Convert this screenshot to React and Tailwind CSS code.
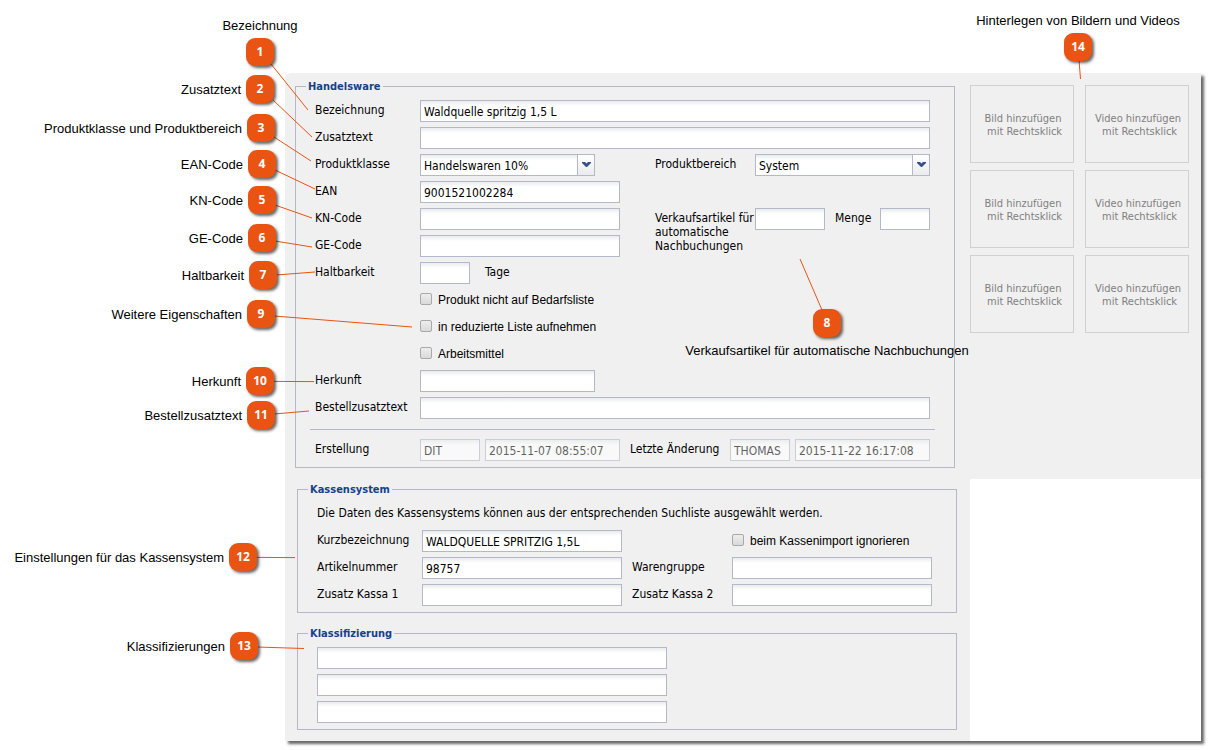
import React, { useState } from 'react';
import clsx from 'clsx';

const CALLOUTS = [
  { n: 1,  x: 246,  y: 38,  side: 'top',    text: 'Bezeichnung', line: [271, 64, 308, 110] },
  { n: 2,  x: 246,  y: 75,  side: 'left',   text: 'Zusatztext', line: [273, 100, 312, 137] },
  { n: 3,  x: 247,  y: 114, side: 'left',   text: 'Produktklasse und Produktbereich', line: [274, 137, 311, 161] },
  { n: 4,  x: 248,  y: 150, side: 'left',   text: 'EAN-Code', line: [275, 170, 315, 189] },
  { n: 5,  x: 248,  y: 186, side: 'left',   text: 'KN-Code', line: [275, 205, 312, 218] },
  { n: 6,  x: 248,  y: 224, side: 'left',   text: 'GE-Code', line: [275, 241, 312, 247] },
  { n: 7,  x: 249,  y: 261, side: 'left',   text: 'Haltbarkeit', line: [276, 275, 315, 272] },
  { n: 8,  x: 813,  y: 309, side: 'bottom', text: 'Verkaufsartikel für automatische Nachbuchungen', line: [822, 310, 800, 259] },
  { n: 9,  x: 247,  y: 300, side: 'left',   text: 'Weitere Eigenschaften', line: [274, 316, 412, 327] },
  { n: 10, x: 246,  y: 367, side: 'left',   text: 'Herkunft', line: [273, 381.4, 314, 381.6] },
  { n: 11, x: 247,  y: 401, side: 'left',   text: 'Bestellzusatztext', line: [274, 414, 309, 411] },
  { n: 12, x: 229,  y: 543, side: 'left',   text: 'Einstellungen für das Kassensystem', line: [256, 557.4, 295, 557.6] },
  { n: 13, x: 230,  y: 632, side: 'left',   text: 'Klassifizierungen', line: [257, 647, 304, 648.5] },
  { n: 14, x: 1064, y: 33,  side: 'top',    text: 'Hinterlegen von Bildern und Videos', line: [1079, 60, 1080.5, 79] },
];

const LABEL_SIDE = {
  left: 'right-full top-px mr-[5px] leading-7',
  top: 'bottom-full left-1/2 mb-0.5 -translate-x-1/2 leading-5',
  bottom: 'top-full left-1/2 mt-1 -translate-x-1/2 leading-5',
};

const Callout = ({ n, x, y, side, text }) => (
  <div className="absolute size-7" style={{ left: x, top: y }}>
    <span className="flex size-7 items-center justify-center rounded-[9px] bg-[#e95412] font-['Open_Sans',sans-serif] text-xs font-bold text-white shadow-[2px_2px_3px_rgba(0,0,0,0.6)]">
      {n}
    </span>
    <span className={clsx("absolute whitespace-nowrap font-['Liberation_Sans',sans-serif] text-[13px] text-black", LABEL_SIDE[side])}>
      {text}
    </span>
  </div>
);

const Callouts = () => (
  <div className="pointer-events-none absolute inset-0">
    <svg className="absolute inset-0 size-full" stroke="#e95412" strokeWidth="1" aria-hidden="true">
      {CALLOUTS.map(({ n, line: [x1, y1, x2, y2] }) => (
        <line key={n} x1={x1} y1={y1} x2={x2} y2={y2} />
      ))}
    </svg>
    {CALLOUTS.map(c => <Callout key={c.n} {...c} />)}
  </div>
);

const Group = ({ title, className, children }) => (
  <fieldset className={clsx('min-w-0 border border-[#b5b8c8] px-2.5 pb-1.5', className)}>
    <legend className="px-0.5 pt-px text-[11px] font-bold leading-3 text-[#15428b]">{title}</legend>
    <div className="flex flex-col gap-[5px] pl-[9px] pr-3.5 pt-[7px]">{children}</div>
  </fieldset>
);

const Row = ({ children }) => <div className="flex h-[22px] items-start">{children}</div>;

const Label = ({ className = 'w-[105px]', ...rest }) => (
  <label className={clsx('shrink-0 whitespace-nowrap pt-[3px] leading-[14px]', className)} {...rest} />
);

const FIELD = 'h-[22px] border border-[#b5b8c8] bg-white bg-linear-to-b from-[#e9eced] to-white to-[5px] px-[3px] pt-0.5 text-black outline-none';

const Field = ({ className, value = '', ...rest }) => (
  <input type="text" defaultValue={value} className={clsx(FIELD, 'min-w-0 disabled:text-black disabled:opacity-60', className)} {...rest} />
);

const Dropdown = ({ id, options }) => (
  <div className="relative w-[175px] shrink-0">
    <select id={id} className={clsx(FIELD, 'w-full appearance-none pr-5')}>
      {options.map(o => <option key={o}>{o}</option>)}
    </select>
    <span className="pointer-events-none absolute right-0 top-0 flex h-[22px] w-[18px] items-center justify-center rounded-tr-xs border border-[#b5b8c8] bg-linear-to-b from-white to-[#ececee]">
      <svg width="9" height="6" viewBox="0 0 9 6" fill="#33518f" aria-hidden="true">
        <path d="M0 0H3L4.5 1.5L6 0H9V1L5 5H4L0 1Z" />
      </svg>
    </span>
  </div>
);

const Check = ({ children }) => {
  const [on, setOn] = useState(false);
  return (
    <label className="flex h-[22px] items-center gap-1.5 whitespace-nowrap font-['Liberation_Sans',sans-serif]">
      <input
        type="checkbox"
        checked={on}
        onChange={e => setOn(e.target.checked)}
        className="mb-0.5 size-3 appearance-none rounded-xs border border-[#a9a9a9] bg-linear-to-b from-[#ededed] to-[#dadada] checked:bg-[#33518f]"
      />
      {children}
    </label>
  );
};

const MediaSlot = ({ kind }) => (
  <button type="button" className="h-[78px] border border-[#d0d0d0] pl-0.5 pt-0.5 text-[11px] leading-[13px] text-[#808080]">
    {kind} hinzufügen<br />&nbsp;mit Rechtsklick
  </button>
);

export default function App() {
  return (
    <div className="relative min-h-screen bg-white pb-[9px] pl-[285px] pr-[9px] pt-[73px] font-['DejaVu_Sans_Condensed','DejaVu_Sans',sans-serif] text-xs text-black">
      <main className="flex rounded-tl-md bg-white shadow-[3px_3px_3px_rgba(0,0,0,0.6)]">
        <form className="w-[685px] shrink-0 rounded-tl-md bg-[#f0f0f0] pb-[11px] pl-2.5 pr-[13px] pt-[7px]">
          <Group title="Handelsware" className="mr-0.5">
            <Row>
              <Label htmlFor="bezeichnung">Bezeichnung</Label>
              <Field id="bezeichnung" className="flex-1" value="Waldquelle spritzig 1,5 L" />
            </Row>
            <Row>
              <Label htmlFor="zusatztext">Zusatztext</Label>
              <Field id="zusatztext" className="flex-1" />
            </Row>
            <Row>
              <Label htmlFor="klasse">Produktklasse</Label>
              <Dropdown id="klasse" options={['Handelswaren 10%', 'Handelswaren 20%']} />
              <Label htmlFor="bereich" className="ml-auto w-[100px]">Produktbereich</Label>
              <Dropdown id="bereich" options={['System']} />
            </Row>
            <Row>
              <Label htmlFor="ean">EAN</Label>
              <Field id="ean" className="w-[200px]" value="9001521002284" />
            </Row>
            <Row>
              <Label htmlFor="kn">KN-Code</Label>
              <Field id="kn" className="w-[200px]" />
              <Label htmlFor="verkauf" className="ml-auto w-[100px]">
                Verkaufsartikel für<br />automatische<br />Nachbuchungen
              </Label>
              <Field id="verkauf" className="w-[70px]" />
              <Label htmlFor="menge" className="ml-2.5 w-[45px]">Menge</Label>
              <Field id="menge" className="w-[50px]" />
            </Row>
            <Row>
              <Label htmlFor="ge">GE-Code</Label>
              <Field id="ge" className="w-[200px]" />
            </Row>
            <Row>
              <Label htmlFor="haltbarkeit">Haltbarkeit</Label>
              <Field id="haltbarkeit" className="w-[50px]" />
              <Label htmlFor="haltbarkeit" className="ml-[15px]">Tage</Label>
            </Row>
            <div className="flex flex-col gap-[5px] pl-[105px]">
              <Check>Produkt nicht auf Bedarfsliste</Check>
              <Check>in reduzierte Liste aufnehmen</Check>
              <Check>Arbeitsmittel</Check>
            </div>
            <Row>
              <Label htmlFor="herkunft">Herkunft</Label>
              <Field id="herkunft" className="w-[175px]" />
            </Row>
            <Row>
              <Label htmlFor="bestell">Bestellzusatztext</Label>
              <Field id="bestell" className="flex-1" />
            </Row>
            <hr className="-mx-[5px] mb-1 mt-[5px] border-[#b5b8c8]" />
            <Row>
              <Label htmlFor="erstellt-von">Erstellung</Label>
              <Field id="erstellt-von" className="w-[60px]" value="DIT" disabled />
              <Field className="ml-[5px] w-[135px]" value="2015-11-07 08:55:07" aria-label="Erstellt am" disabled />
              <Label htmlFor="geaendert-von" className="ml-2.5 w-[100px]">Letzte Änderung</Label>
              <Field id="geaendert-von" className="w-[60px]" value="THOMAS" disabled />
              <Field className="ml-[5px] w-[135px]" value="2015-11-22 16:17:08" aria-label="Geändert am" disabled />
            </Row>
          </Group>

          <Group title="Kassensystem" className="ml-0.5 mt-[15px]">
            <p className="h-[22px] pt-[3px] leading-[14px]">
              Die Daten des Kassensystems können aus der entsprechenden Suchliste ausgewählt werden.
            </p>
            <Row>
              <Label htmlFor="kurz">Kurzbezeichnung</Label>
              <Field id="kurz" className="w-[200px]" value="WALDQUELLE SPRITZIG 1,5L" />
              <div className="ml-auto w-[200px]">
                <Check>beim Kassenimport ignorieren</Check>
              </div>
            </Row>
            <Row>
              <Label htmlFor="artnr">Artikelnummer</Label>
              <Field id="artnr" className="w-[200px]" value="98757" />
              <Label htmlFor="gruppe" className="ml-auto w-[100px]">Warengruppe</Label>
              <Field id="gruppe" className="w-[200px]" />
            </Row>
            <Row>
              <Label htmlFor="kassa1">Zusatz Kassa 1</Label>
              <Field id="kassa1" className="w-[200px]" />
              <Label htmlFor="kassa2" className="ml-auto w-[100px]">Zusatz Kassa 2</Label>
              <Field id="kassa2" className="w-[200px]" />
            </Row>
          </Group>

          <Group title="Klassifizierung" className="ml-0.5 mt-3.5">
            {[1, 2, 3].map(i => (
              <Field key={i} className="w-[350px]" aria-label={`Klassifizierung ${i}`} />
            ))}
          </Group>
        </form>

        <aside className="grid flex-1 grid-cols-2 gap-x-[11px] gap-y-[7px] self-start bg-[#f0f0f0] pb-[146px] pr-3 pt-3">
          {[1, 2, 3].map(i => (
            <React.Fragment key={i}>
              <MediaSlot kind="Bild" />
              <MediaSlot kind="Video" />
            </React.Fragment>
          ))}
        </aside>
      </main>
      <Callouts />
    </div>
  );
}
